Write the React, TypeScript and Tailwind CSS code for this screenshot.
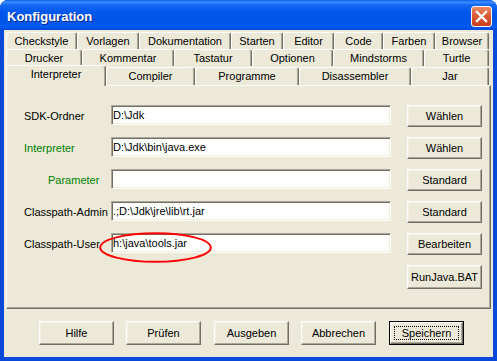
import React from "react";

type TabDef = { label: string; w: string };

const row1: TabDef[] = [
  { label: "Checkstyle", w: "w-[71px]" },
  { label: "Vorlagen", w: "w-[62px]" },
  { label: "Dokumentation", w: "w-[92px]" },
  { label: "Starten", w: "w-[52px]" },
  { label: "Editor", w: "w-[51px]" },
  { label: "Code", w: "w-[49px]" },
  { label: "Farben", w: "w-[52px]" },
  { label: "Browser", w: "w-[54px]" },
];
const row2: TabDef[] = [
  { label: "Drucker", w: "w-[76px]" },
  { label: "Kommentar", w: "w-[92px]" },
  { label: "Tastatur", w: "w-[78px]" },
  { label: "Optionen", w: "w-[81px]" },
  { label: "Mindstorms", w: "w-[91px]" },
  { label: "Turtle", w: "w-[65px]" },
];
const row3: TabDef[] = [
  { label: "Compiler", w: "w-[89px]" },
  { label: "Programme", w: "w-[104px]" },
  { label: "Disassembler", w: "w-[112px]" },
  { label: "Jar", w: "w-[78px]" },
];

const tabBase =
  "flex items-center justify-center shrink-0 bg-[#ECE9D8] border-t border-l border-r border-t-white border-l-white border-r-[#716F64] rounded-t-[3px] shadow-[inset_-1px_0_#ACA899] text-[11px] text-black leading-none";

function Tab({ t, h }: { t: TabDef; h: string }) {
  return <div className={`${tabBase} ${t.w} ${h}`}>{t.label}</div>;
}

const btnBase =
  "flex items-center justify-center bg-[#ECE9D8] border border-t-white border-l-white border-r-[#716F64] border-b-[#716F64] shadow-[inset_-1px_-1px_#ACA899,inset_1px_1px_#F1EFE2] text-[11px] text-black leading-none";

function Btn({ label, cls }: { label: string; cls: string }) {
  return <div className={`${btnBase} ${cls}`}>{label}</div>;
}

function Input({ value }: { value: string }) {
  return (
    <div className="w-[280px] h-[20px] bg-white border border-t-[#ACA899] border-l-[#ACA899] border-b-white border-r-white shadow-[inset_1px_1px_#716F64,inset_-1px_-1px_#F1EFE2] flex items-center pl-[1px] text-[11px] text-black leading-none whitespace-nowrap">
      {value}
    </div>
  );
}

function Row({
  label,
  labelCls,
  value,
  btn,
}: {
  label: string;
  labelCls: string;
  value: string;
  btn: string;
}) {
  return (
    <>
      <div className={`h-[22px] flex items-center text-[11px] leading-none ${labelCls}`}>{label}</div>
      <div className="h-[22px]">
        <Input value={value} />
      </div>
      <Btn label={btn} cls="w-[75px] h-[22px]" />
    </>
  );
}

export default function App() {
  return (
    <div className="w-[497px] h-[361px] relative bg-[#0A48D9] rounded-t-[8px] overflow-hidden flex flex-col [font-family:'Liberation_Sans',Arial,sans-serif]">
      {/* Title bar */}
      <div className="h-[30px] shrink-0 flex items-center pt-[2px] pl-[7px] pr-[5px] bg-[linear-gradient(180deg,#0A5CE8_0%,#3D8FFF_7%,#1468F5_16%,#0058EC_40%,#0054E5_70%,#005CF2_88%,#0049DA_100%)]">
        <span className="text-white font-bold text-[13px] leading-none [text-shadow:1px_1px_#0B2A8C]">
          Konfiguration
        </span>
        <div className="ml-auto w-[21px] h-[21px] rounded-[3px] border border-white bg-[linear-gradient(180deg,#EC8A66_0%,#DB5A35_45%,#C83E1C_100%)] flex items-center justify-center">
          <svg width="19" height="19" viewBox="0 0 19 19">
            <path d="M5 5 L14 14 M14 5 L5 14" stroke="#fff" strokeWidth="2.4" strokeLinecap="square" />
          </svg>
        </div>
      </div>

      {/* Body */}
      <div className="mx-[4px] mb-[4px] flex-1 bg-[#ECE9D8] flex flex-col pt-[2px] px-[2px]">
        {/* Tab rows */}
        <div className="flex h-[17px]">
          {row1.map((t) => (
            <Tab key={t.label} t={t} h="h-[17px]" />
          ))}
        </div>
        <div className="flex h-[17px]">
          {row2.map((t) => (
            <Tab key={t.label} t={t} h="h-[17px]" />
          ))}
        </div>
        <div className="flex h-[19px] items-end relative z-10">
          <div className={`${tabBase} w-[100px] h-[21px] -mb-[1px] pb-[3px]`}>Interpreter</div>
          {row3.map((t) => (
            <Tab key={t.label} t={t} h="h-[18px]" />
          ))}
        </div>

        {/* Panel */}
        <div className="h-[224px] w-[485px] border border-t-white border-l-white border-r-[#716F64] border-b-[#716F64] shadow-[inset_-1px_-1px_#ACA899] pt-[19px] pl-[17px]">
          <div className="grid grid-cols-[87px_296px_75px] gap-y-[10px]">
            <Row label="SDK-Ordner" labelCls="text-black" value="D:\Jdk" btn="Wählen" />
            <Row label="Interpreter" labelCls="text-[#008000]" value="D:\Jdk\bin\java.exe" btn="Wählen" />
            <Row label="Parameter" labelCls="text-[#008000] pl-[24px]" value="" btn="Standard" />
            <Row label="Classpath-Admin" labelCls="text-black" value=".;D:\Jdk\jre\lib\rt.jar" btn="Standard" />
            <Row label="Classpath-User" labelCls="text-black" value="h:\java\tools.jar" btn="Bearbeiten" />
            <div className="col-start-3">
              <Btn label="RunJava.BAT" cls="w-[75px] h-[24px]" />
            </div>
          </div>
        </div>

        {/* Bottom buttons */}
        <div className="flex mt-[12px] pl-[33px]">
          <Btn label="Hilfe" cls="w-[75px] h-[24px]" />
          <Btn label="Prüfen" cls="w-[75px] h-[24px] ml-[12px]" />
          <Btn label="Ausgeben" cls="w-[75px] h-[24px] ml-[13px]" />
          <Btn label="Abbrechen" cls="w-[75px] h-[24px] ml-[12px]" />
          <div className="ml-[13px] w-[75px] h-[24px] border border-black">
            <div className={`${btnBase} w-full h-full relative`}>
              <div className="absolute inset-[3px] border border-dotted border-black" />
              Speichern
            </div>
          </div>
        </div>
      </div>

      {/* Red annotation ellipse */}
      <svg
        className="absolute left-[99px] top-[232px] pointer-events-none"
        width="113"
        height="31"
        viewBox="0 0 113 31"
      >
        <ellipse cx="56.5" cy="15.5" rx="55.3" ry="14.3" fill="none" stroke="#FF0000" strokeWidth="2" />
      </svg>
    </div>
  );
}
